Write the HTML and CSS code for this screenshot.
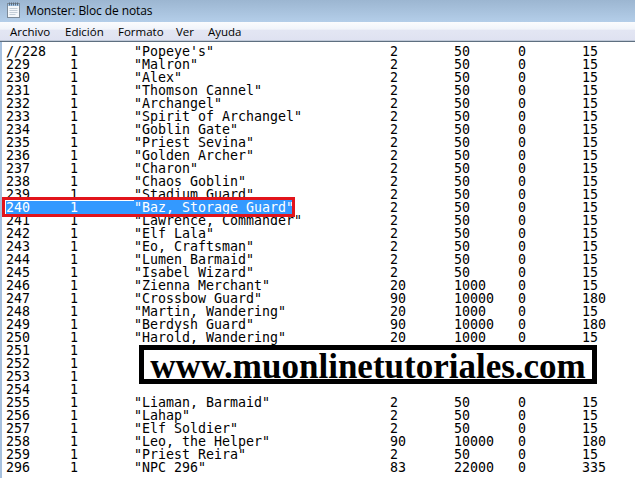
FILE: index.html
```html
<!DOCTYPE html>
<html lang="es">
<head>
<meta charset="utf-8">
<title>Monster: Bloc de notas</title>
<link rel="stylesheet" href="styles.css">
</head>
<body>
<div class="window">
  <div class="titlebar">
    <svg class="app-icon" width="13" height="16" viewBox="0 0 13 16">
      <rect x="0.5" y="1.5" width="12" height="14" fill="#f4f7fa" stroke="#7d8b99"/>
      <rect x="1" y="2" width="11" height="2" fill="#9fc3e6"/>
      <path d="M2.5 0.5v3M4.5 0.5v3M6.5 0.5v3M8.5 0.5v3M10.5 0.5v3" stroke="#5a6b7c" stroke-width="1"/>
      <path d="M2.5 6.5h8M2.5 8.5h8M2.5 10.5h8M2.5 12.5h6" stroke="#c3cdd7" stroke-width="1"/>
    </svg>
    <span class="title">Monster: Bloc de notas</span>
  </div>
  <div class="menubar">
    <span class="menu m-archivo">Archivo</span>
    <span class="menu m-edicion">Edición</span>
    <span class="menu m-formato">Formato</span>
    <span class="menu m-ver">Ver</span>
    <span class="menu m-ayuda">Ayuda</span>
  </div>
  <div class="editor">
    <div class="line"><span>//228</span><span>1</span><span>"Popeye's"</span><span>2</span><span>50</span><span>0</span><span>15</span></div>
    <div class="line"><span>229</span><span>1</span><span>"Malron"</span><span>2</span><span>50</span><span>0</span><span>15</span></div>
    <div class="line"><span>230</span><span>1</span><span>"Alex"</span><span>2</span><span>50</span><span>0</span><span>15</span></div>
    <div class="line"><span>231</span><span>1</span><span>"Thomson Cannel"</span><span>2</span><span>50</span><span>0</span><span>15</span></div>
    <div class="line"><span>232</span><span>1</span><span>"Archangel"</span><span>2</span><span>50</span><span>0</span><span>15</span></div>
    <div class="line"><span>233</span><span>1</span><span>"Spirit of Archangel"</span><span>2</span><span>50</span><span>0</span><span>15</span></div>
    <div class="line"><span>234</span><span>1</span><span>"Goblin Gate"</span><span>2</span><span>50</span><span>0</span><span>15</span></div>
    <div class="line"><span>235</span><span>1</span><span>"Priest Sevina"</span><span>2</span><span>50</span><span>0</span><span>15</span></div>
    <div class="line"><span>236</span><span>1</span><span>"Golden Archer"</span><span>2</span><span>50</span><span>0</span><span>15</span></div>
    <div class="line"><span>237</span><span>1</span><span>"Charon"</span><span>2</span><span>50</span><span>0</span><span>15</span></div>
    <div class="line"><span>238</span><span>1</span><span>"Chaos Goblin"</span><span>2</span><span>50</span><span>0</span><span>15</span></div>
    <div class="line"><span>239</span><span>1</span><span>"Stadium Guard"</span><span>2</span><span>50</span><span>0</span><span>15</span></div>
    <div class="line"><span class="sel">240</span><span class="sel">1</span><span><span class="sel">"Baz, Storage Guard"</span></span><span>2</span><span>50</span><span>0</span><span>15</span></div>
    <div class="line"><span>241</span><span>1</span><span>"Lawrence, Commander"</span><span>2</span><span>50</span><span>0</span><span>15</span></div>
    <div class="line"><span>242</span><span>1</span><span>"Elf Lala"</span><span>2</span><span>50</span><span>0</span><span>15</span></div>
    <div class="line"><span>243</span><span>1</span><span>"Eo, Craftsman"</span><span>2</span><span>50</span><span>0</span><span>15</span></div>
    <div class="line"><span>244</span><span>1</span><span>"Lumen Barmaid"</span><span>2</span><span>50</span><span>0</span><span>15</span></div>
    <div class="line"><span>245</span><span>1</span><span>"Isabel Wizard"</span><span>2</span><span>50</span><span>0</span><span>15</span></div>
    <div class="line"><span>246</span><span>1</span><span>"Zienna Merchant"</span><span>20</span><span>1000</span><span>0</span><span>15</span></div>
    <div class="line"><span>247</span><span>1</span><span>"Crossbow Guard"</span><span>90</span><span>10000</span><span>0</span><span>180</span></div>
    <div class="line"><span>248</span><span>1</span><span>"Martin, Wandering"</span><span>20</span><span>1000</span><span>0</span><span>15</span></div>
    <div class="line"><span>249</span><span>1</span><span>"Berdysh Guard"</span><span>90</span><span>10000</span><span>0</span><span>180</span></div>
    <div class="line"><span>250</span><span>1</span><span>"Harold, Wandering"</span><span>20</span><span>1000</span><span>0</span><span>15</span></div>
    <div class="line"><span>251</span><span>1</span></div>
    <div class="line"><span>252</span><span>1</span></div>
    <div class="line"><span>253</span><span>1</span></div>
    <div class="line"><span>254</span><span>1</span></div>
    <div class="line"><span>255</span><span>1</span><span>"Liaman, Barmaid"</span><span>2</span><span>50</span><span>0</span><span>15</span></div>
    <div class="line"><span>256</span><span>1</span><span>"Lahap"</span><span>2</span><span>50</span><span>0</span><span>15</span></div>
    <div class="line"><span>257</span><span>1</span><span>"Elf Soldier"</span><span>2</span><span>50</span><span>0</span><span>15</span></div>
    <div class="line"><span>258</span><span>1</span><span>"Leo, the Helper"</span><span>90</span><span>10000</span><span>0</span><span>180</span></div>
    <div class="line"><span>259</span><span>1</span><span>"Priest Reira"</span><span>2</span><span>50</span><span>0</span><span>15</span></div>
    <div class="line"><span>296</span><span>1</span><span>"NPC 296"</span><span>83</span><span>22000</span><span>0</span><span>335</span></div>

    <div class="marker"></div>
    <div class="banner">www.muonlinetutoriales.com</div>
  </div>
</div>
</body>
</html>
```
FILE: styles.css
```css
html, body {
  margin: 0;
  padding: 0;
  background: #ffffff;
}

.window {
  width: 635px;
  height: 478px;
  overflow: hidden;
  display: flex;
  flex-direction: column;
}

.titlebar {
  height: 22px;
  flex: none;
  display: flex;
  align-items: center;
  gap: 6px;
  padding-left: 7px;
  background: linear-gradient(#9cb6d1, #b4cee9);
  font-family: "Open Sans", "Noto Sans", sans-serif;
  font-size: 12px;
  color: #000;
}

.app-icon {
  flex: none;
  margin-top: -2px;
}

.title {
  letter-spacing: -0.1px;
  margin-top: -1px;
}

.menubar {
  height: 18px;
  flex: none;
  display: flex;
  align-items: center;
  background: linear-gradient(#fbfcfe 0%, #f1f4fa 40%, #e3e6f3 45%, #dfe2f1 100%);
  border-bottom: 1px solid #c0c9d8;
  box-shadow: 0 1px 0 #5e6f80;
  font-family: "Open Sans", "Noto Sans", sans-serif;
  font-size: 11.5px;
  color: #000;
  padding-left: 10px;
  margin-bottom: 1px;
}

.menu { flex: none; }
.m-archivo { width: 55px; }
.m-edicion { width: 53px; }
.m-formato { width: 58px; }
.m-ver { width: 32px; }
.m-ayuda { width: 50px; }

.editor {
  position: relative;
  flex: 1;
  border-left: 2px solid #a6c0de;
  padding-top: 3px;
  padding-left: 4px;
  font-family: "DejaVu Sans Mono", "Liberation Mono", monospace;
  font-size: 13.29px;
  color: #000;
}

.line {
  display: grid;
  grid-template-columns: 64px 64px 256px 64px 64px 64px 1fr;
  height: 13px;
  line-height: 13px;
  white-space: pre;
}

.sel {
  background: #3399ff;
  color: #ffffff;
}

.marker {
  position: absolute;
  left: 0;
  top: 155px;
  width: 293px;
  height: 20px;
  box-sizing: border-box;
  border: 3px solid #e2141b;
}

.banner {
  position: absolute;
  left: 137px;
  top: 303px;
  width: 458px;
  height: 39px;
  box-sizing: border-box;
  border: 5px solid #000;
  background: #fff;
  font-family: "Liberation Serif", "Times New Roman", serif;
  font-weight: bold;
  font-size: 35px;
  line-height: 26px;
  text-align: center;
  color: #000;
  padding-top: 4px;
}
```
